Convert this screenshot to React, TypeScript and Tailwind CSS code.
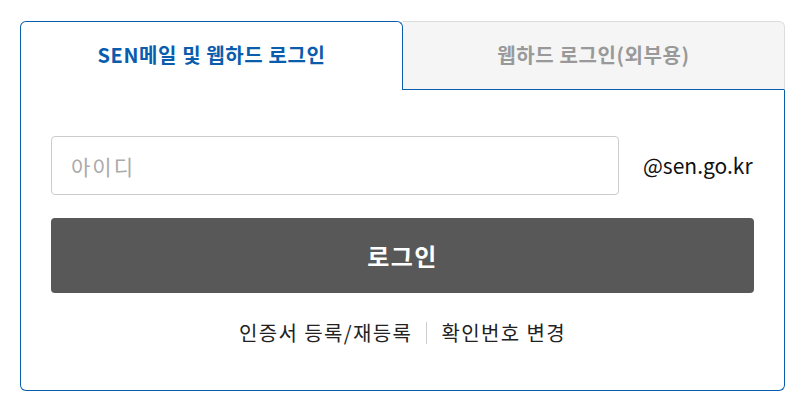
import React from 'react';

const font = { fontFamily: '"Noto Sans CJK KR", "Noto Sans", sans-serif' };

export default function App() {
  return (
    <div className="min-h-screen bg-white pt-[21px] pl-[20px]" style={font}>
      <div className="w-[765px]">
        {/* tabs */}
        <div className="flex h-[69px]">
          <div className="flex w-[383px] items-center justify-center rounded-t-[6px] border border-b-0 border-[#0a5cad] bg-white pb-[2px]">
            <span className="text-[20px] font-bold tracking-[0.6px] text-[#0a5cad]">SEN메일 및 웹하드 로그인</span>
          </div>
          <div className="flex flex-1 items-center justify-center rounded-tr-[6px] border-t border-r border-b border-t-[#dddddd] border-r-[#dddddd] border-b-[#0a5cad] bg-[#f5f5f5] pb-[1px]">
            <span className="text-[20px] font-bold tracking-[0.6px] text-[#999999]">웹하드 로그인(외부용)</span>
          </div>
        </div>
        {/* body */}
        <div className="rounded-b-[6px] border border-t-0 border-[#0a5cad] px-[30px] pt-[46px] pb-[42px]">
          <div className="flex items-center gap-[24px]">
            <input
              type="text"
              placeholder="아이디"
              className="h-[59px] w-[568px] rounded-[4px] border border-[#cccccc] px-[19px] text-[21px] tracking-[2px] text-[#333] placeholder:text-[#aaaaaa] outline-none"
              style={font}
            />
            <span className="text-[21px] text-[#111]">@sen.go.kr</span>
          </div>
          <button
            className="mt-[23px] flex h-[75px] w-full items-center justify-center rounded-[4px] bg-[#585858] text-[24px] font-bold tracking-[1.5px] text-white"
            style={font}
          >
            로그인
          </button>
          <div className="mt-[25px] flex items-center justify-center text-[20px] tracking-[1.4px] text-[#222]">
            <span>인증서 등록/재등록</span>
            <span className="mx-[14px] h-[22px] w-px bg-[#cccccc]" />
            <span>확인번호 변경</span>
          </div>
        </div>
      </div>
    </div>
  );
}
